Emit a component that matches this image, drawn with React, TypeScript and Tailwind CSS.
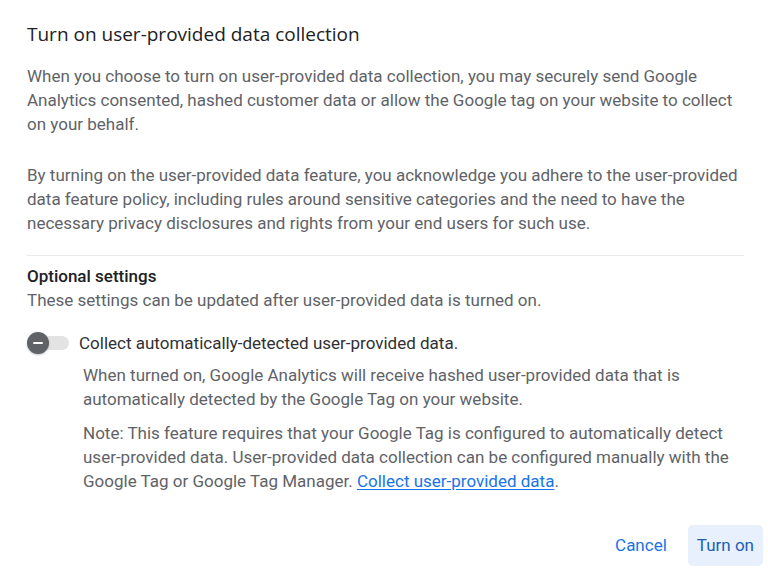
export default function App() {
  return (
    <div className="w-[768px] h-[569px] bg-white font-['Roboto','Liberation_Sans',sans-serif] flex flex-col">
      <div className="px-[27px] pt-[22px]">
        <h1 className="font-['Open_Sans','Roboto',sans-serif] text-[19px] leading-6 text-[#202124]">
          Turn on user-provided data collection
        </h1>
        <p className="mt-[18px] w-[717px] text-[17px] leading-6 text-[#5f6368]">
          When you choose to turn on user-provided data collection, you may securely send Google
          Analytics consented, hashed customer data or allow the Google tag on your website to collect
          on your behalf.
        </p>
        <p className="mt-[27px] w-[717px] text-[17px] leading-6 text-[#5f6368]">
          By turning on the user-provided data feature, you acknowledge you adhere to the user-provided
          data feature policy, including rules around sensitive categories and the need to have the
          necessary privacy disclosures and rights from your end users for such use.
        </p>
        <div className="mt-[20px] h-px bg-[#e8eaed] w-[717px]" />
        <div className="mt-[8px] text-[17px] leading-6 font-medium text-[#202124]">Optional settings</div>
        <div className="text-[17px] leading-6 text-[#5f6368]">
          These settings can be updated after user-provided data is turned on.
        </div>
        <div className="mt-[19px] flex items-center h-6">
          <div className="relative w-[42px] h-6 flex items-center">
            <div className="ml-[2px] w-[40px] h-[14px] rounded-full bg-[#e3e3e3]" />
            <div className="absolute left-0 top-[1px] w-[22px] h-[22px] rounded-full bg-[#5f6368] flex items-center justify-center shadow-[0_1px_2px_rgba(0,0,0,0.25)]">
              <div className="w-[10px] h-[2px] bg-white rounded-sm" />
            </div>
          </div>
          <span className="ml-[10px] text-[17px] leading-6 text-[#303134]">
            Collect automatically-detected user-provided data.
          </span>
        </div>
        <div className="pl-[56px] w-[717px] text-[17px] leading-6 text-[#5f6368]">
          <p className="mt-[8px]">
            When turned on, Google Analytics will receive hashed user-provided data that is
            automatically detected by the Google Tag on your website.
          </p>
          <p className="mt-[10px]">
            Note: This feature requires that your Google Tag is configured to automatically detect
            user-provided data. User-provided data collection can be configured manually with the
            Google Tag or Google Tag Manager.{" "}
            <a className="text-[#1a73e8] underline underline-offset-2">Collect user-provided data</a>.
          </p>
        </div>
      </div>
      <div className="mt-auto mb-[3px] flex justify-end items-center gap-[12px] pr-[5px]">
        <button className="h-[41px] px-[9px] text-[17px] text-[#1a73e8]">Cancel</button>
        <button className="h-[41px] px-[9px] rounded-[5px] bg-[#e8f0fe] text-[17px] text-[#1a5fb4]">Turn on</button>
      </div>
    </div>
  );
}
